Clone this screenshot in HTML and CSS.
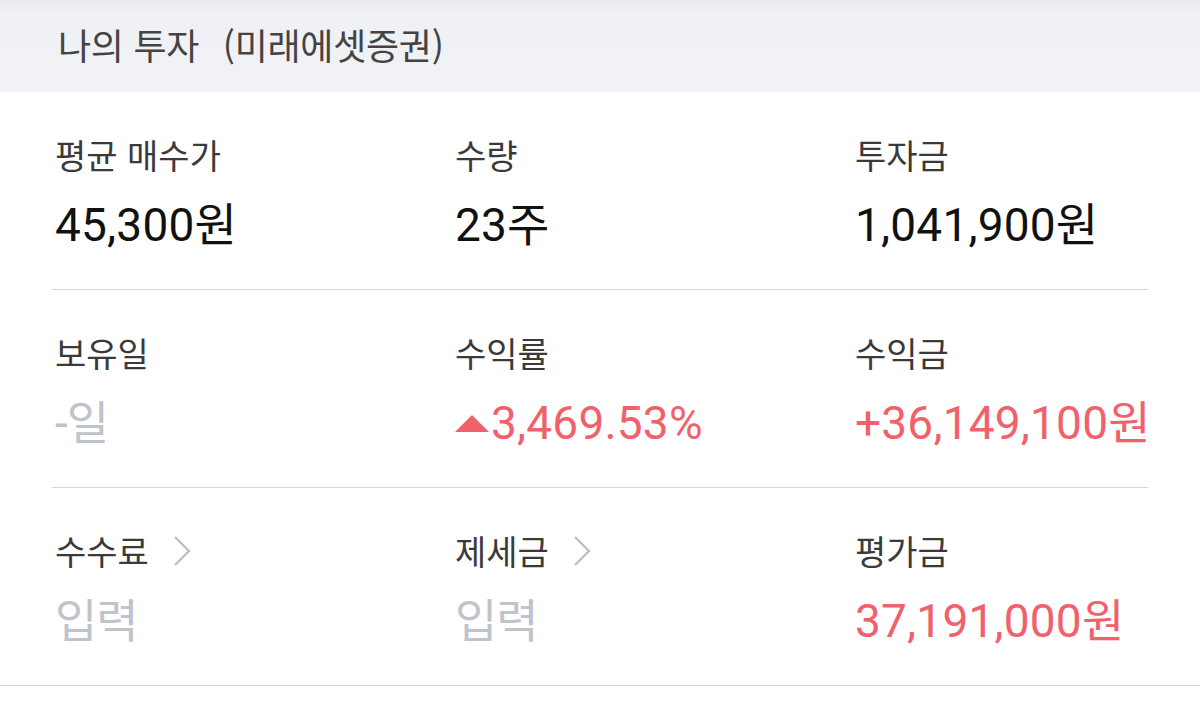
FILE: index.html
```html
<!DOCTYPE html>
<html lang="ko">
  <head>
    <meta charset="UTF-8" />
    <meta name="viewport" content="width=device-width, initial-scale=1.0" />
    <title>나의 투자</title>
    <link rel="stylesheet" href="styles.css">
  </head>
  <body>
    <div class="header">
      <h2>나의 투자 <span class="broker">(미래에셋증권)</span></h2>
    </div>
    <div class="summary">
      <div class="row">
        <div class="cell">
          <div class="label">평균 매수가</div>
          <div class="value">45,300원</div>
        </div>
        <div class="cell">
          <div class="label">수량</div>
          <div class="value">23주</div>
        </div>
        <div class="cell">
          <div class="label">투자금</div>
          <div class="value">1,041,900원</div>
        </div>
      </div>
      <div class="row">
        <div class="cell">
          <div class="label">보유일</div>
          <div class="value muted">-일</div>
        </div>
        <div class="cell">
          <div class="label">수익률</div>
          <div class="value up"><span class="arrow"></span>3,469.53%</div>
        </div>
        <div class="cell">
          <div class="label">수익금</div>
          <div class="value up">+36,149,100원</div>
        </div>
      </div>
      <div class="row last">
        <div class="cell">
          <div class="label link">수수료
            <svg class="chevron" width="18" height="32" viewBox="0 0 18 32"><path d="M2 2 L16 16 L2 30" fill="none" stroke="#bdbdbd" stroke-width="2.2"/></svg>
          </div>
          <div class="value muted">입력</div>
        </div>
        <div class="cell">
          <div class="label link">제세금
            <svg class="chevron" width="18" height="32" viewBox="0 0 18 32"><path d="M2 2 L16 16 L2 30" fill="none" stroke="#bdbdbd" stroke-width="2.2"/></svg>
          </div>
          <div class="value muted">입력</div>
        </div>
        <div class="cell">
          <div class="label">평가금</div>
          <div class="value up">37,191,000원</div>
        </div>
      </div>
    </div>
  </body>
</html>
```

FILE: styles.css
```css
body {
  margin: 0;
  background: #fff;
  font-family: Roboto, "Noto Sans CJK KR", sans-serif;
  color: #111;
}

.header {
  height: 92px;
  background: linear-gradient(#e9eaee, #f0f1f4 14px, #f1f2f5);
  display: flex;
  align-items: center;
  padding-left: 58px;
}

.header h2 {
  margin: 0 0 4px;
  font-family: "Noto Sans CJK KR", sans-serif;
  font-weight: 400;
  font-size: 36px;
  color: #444;
  letter-spacing: -0.3px;
}

.broker {
  margin-left: 14px;
}

.row {
  display: grid;
  grid-template-columns: 400px 400px 1fr;
  margin: 0 52px;
  padding: 40px 0 37px 3px;
  border-bottom: 1px solid #d6d6d6;
}

.row.last {
  margin: 0;
  padding-left: 55px;
  border-bottom-color: #d2d2d2;
}

.label {
  font-family: "Noto Sans CJK KR", sans-serif;
  font-size: 34px;
  color: #3a3a3a;
  line-height: 46px;
  display: flex;
  align-items: center;
}

.chevron {
  margin-left: 24px;
}

.value {
  margin-top: 20px;
  font-size: 46px;
  line-height: 54px;
  letter-spacing: 0.2px;
  white-space: nowrap;
  display: flex;
  align-items: center;
}

.value.muted {
  color: #bfc3cb;
  letter-spacing: -1px;
}

.value.up {
  color: #f1616b;
}

.arrow {
  width: 0;
  height: 0;
  border-left: 17px solid transparent;
  border-right: 17px solid transparent;
  border-bottom: 17px solid #f1616b;
  margin-right: 2px;
}
```
